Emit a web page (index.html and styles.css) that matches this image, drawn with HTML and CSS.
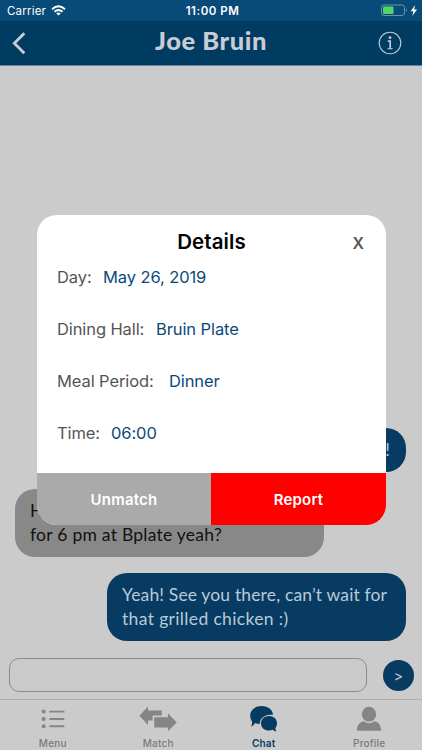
FILE: index.html
```html
<!DOCTYPE html>
<html lang="en">
<head>
    <meta charset="UTF-8">
    <meta name="viewport" content="width=device-width, initial-scale=1.0">
    <title>Joe Bruin</title>
    <link rel="stylesheet" href="styles.css">
</head>
<body>
    <div class="screen">
        <div class="status-bar">
            <div class="carrier">
                <span class="carrier-name">Carrier</span>
                <svg width="15" height="11" viewBox="0 0 15 11" fill="none" stroke="#fff" stroke-width="1.9">
                    <path d="M1 4.2Q7.5 -1.6 14 4.2"/>
                    <path d="M3.4 6.7Q7.5 3.1 11.6 6.7"/>
                    <path d="M7.5 10.6L5.3 8.4Q7.5 6.6 9.7 8.4Z" fill="#fff" stroke="none"/>
                </svg>
            </div>
            <div class="clock">11:00 PM</div>
            <div class="battery">
                <svg width="37" height="13" viewBox="0 0 37 13">
                    <rect x="0.5" y="1" width="23" height="10.5" rx="2.6" fill="none" stroke="#6f93ae"/>
                    <rect x="2" y="2.5" width="10.5" height="7.5" rx="1" fill="#4cd964"/>
                    <path d="M25 4.4Q26.6 6.2 25 8Z" fill="#8ba9be"/>
                    <path d="M34.2 1L29.6 7.2H32.4L31.2 11.9L36.1 5.6H33.1Z" fill="#fff"/>
                </svg>
            </div>
        </div>

        <div class="header">
            <svg class="back" width="14" height="23" viewBox="0 0 14 23" fill="none" stroke="#c9cdd3" stroke-width="2.8">
                <path d="M12.3 1.2L2.3 11.3L12.3 21.3"/>
            </svg>
            <h1>Joe Bruin</h1>
            <svg class="info" width="24" height="24" viewBox="0 0 24 24" fill="none" stroke="#c0cad4">
                <circle cx="12" cy="12" r="10.8" stroke-width="1.1"/>
                <circle cx="12" cy="6.7" r="1.4" fill="#c0cad4" stroke="none"/>
                <path d="M9.8 10.1H12.2V17.6" stroke-width="1.7"/>
                <path d="M9.6 17.7H14.6" stroke-width="1.1"/>
            </svg>
        </div>

        <div class="messages">
            <div class="bubble sent short">!</div>
            <div class="bubble received">H<br>for 6 pm at Bplate yeah?</div>
            <div class="bubble sent">Yeah! See you there, can’t wait for<br><span class="wide">that grilled chicken :)</span></div>
        </div>

        <div class="composer">
            <div class="message-input"></div>
            <div class="send">&gt;</div>
        </div>

        <div class="tabs">
            <div class="tab">
                <svg width="24" height="26" viewBox="0 0 24 26" fill="#858585">
                    <circle cx="2.6" cy="5.6" r="2"/>
                    <circle cx="2.6" cy="12.9" r="2"/>
                    <circle cx="2.6" cy="20.2" r="2"/>
                    <rect x="8.2" y="4.7" width="15.3" height="1.9" rx="0.9"/>
                    <rect x="8.2" y="12" width="15.3" height="1.9" rx="0.9"/>
                    <rect x="8.2" y="19.3" width="15.3" height="1.9" rx="0.9"/>
                </svg>
                <span>Menu</span>
            </div>
            <div class="tab">
                <svg width="38" height="26" viewBox="0 0 38 26" fill="#858585">
                    <path d="M0.4 9.8L9 0.5V4.5H22.8V9.6H13.6V14.6H9V19Z"/>
                    <path d="M15.2 11.2H28.9V7.3L37.8 16.5L28.9 25.2V21.4H15.2Z"/>
                </svg>
                <span>Match</span>
            </div>
            <div class="tab active">
                <svg width="28" height="26" viewBox="0 0 28 26" fill="#083b61">
                    <path d="M11.7 0C18 0 22.8 3.8 23 8.8C15.5 7.8 9.4 11.7 9.8 18C7.9 18 6.4 17.7 5 17.1C4.2 19 2.7 20.3 0.8 20.6C1.9 19.1 2.4 17.4 2 15.4C0.8 13.8 0.2 11.7 0.2 9.5C0.2 4.1 5.2 0 11.7 0Z"/>
                    <path d="M19 10.1C23.7 10.1 27 13.2 27 17.3C27 19.1 26.4 20.9 25.4 22.1C25.3 23.5 25.8 24.7 26.7 25.6C25.1 25.4 23.8 24.7 22.9 23.8C16.8 26 11 22.8 11 17.4C11 13.3 14.3 10.1 19 10.1Z"/>
                </svg>
                <span>Chat</span>
            </div>
            <div class="tab">
                <svg width="26" height="26" viewBox="0 0 26 26" fill="#858585">
                    <ellipse cx="13" cy="8.2" rx="7.2" ry="7.4"/>
                    <path d="M0.8 24.8C0.9 19.3 3.4 16.1 7.7 15.2Q13 19.1 18.3 15.2C22.6 16.1 25.1 19.3 25.2 24.8Z"/>
                </svg>
                <span>Profile</span>
            </div>
        </div>

        <!-- Match details popup -->
        <div class="modal">
            <div class="modal-body">
                <div class="modal-title">
                    <h2>Details</h2>
                    <span class="close">X</span>
                </div>
                <div class="row"><span class="label day">Day:</span><span class="value">May 26, 2019</span></div>
                <div class="row"><span class="label hall">Dining Hall:</span><span class="value">Bruin Plate</span></div>
                <div class="row"><span class="label meal">Meal Period:</span><span class="value">Dinner</span></div>
                <div class="row"><span class="label time">Time:</span><span class="value">06:00</span></div>
            </div>
            <div class="modal-buttons">
                <div class="unmatch">Unmatch</div>
                <div class="report">Report</div>
            </div>
        </div>
    </div>
</body>
</html>
```
FILE: styles.css
```css
* {
    box-sizing: border-box;
}

body {
    margin: 0;
    background-color: #cbcbcb;
    font-family: Inter, "Liberation Sans", sans-serif;
}

.screen {
    position: relative;
    display: flex;
    flex-direction: column;
    width: 422px;
    height: 750px;
    overflow: hidden;
    white-space: nowrap;
}

svg {
    display: block;
    flex: none;
}

/* Status bar */
.status-bar {
    display: grid;
    grid-template-columns: 1fr auto 1fr;
    align-items: center;
    height: 21px;
    padding: 0 4px 0 7px;
    background-color: #084a78;
    color: #fff;
    font-size: 11.5px;
}

.carrier {
    display: flex;
    align-items: center;
    gap: 5px;
}

.carrier-name {
    letter-spacing: 0.2px;
}

.clock {
    font-weight: 600;
    letter-spacing: 0.5px;
}

.battery {
    justify-self: end;
}

/* Header */
.header {
    display: grid;
    grid-template-columns: 60px 1fr 60px;
    align-items: center;
    height: 45px;
    background-color: #003b61;
    border-bottom: 1px solid #64829a;
}

.back {
    margin-left: 12px;
}

.header h1 {
    margin: 0;
    padding-bottom: 6px;
    color: #c9cdd3;
    font-family: Lato, sans-serif;
    font-size: 25.5px;
    font-weight: 900;
    line-height: 30px;
    letter-spacing: 0.55px;
    text-align: center;
}

.info {
    margin-left: 16px;
}

/* Conversation */
.messages {
    display: flex;
    flex: 1;
    flex-direction: column;
    justify-content: flex-end;
    gap: 16.5px;
    padding: 0 16px 17px 15px;
}

.bubble {
    padding: 10px 15px;
    border-radius: 20px;
    font-family: Lato, sans-serif;
    font-size: 17.5px;
    line-height: 24px;
    letter-spacing: 0.15px;
}

.sent {
    align-self: flex-end;
    width: 299px;
    background-color: #083b61;
    color: #b9cad8;
}

.sent .wide {
    letter-spacing: 0.35px;
}

.sent.short {
    width: 120px;
    padding-right: 16px;
    text-align: right;
}

.received {
    align-self: flex-start;
    width: 309px;
    background-color: #888;
    color: #111;
    letter-spacing: 0.25px;
}

.composer {
    display: flex;
    align-items: center;
    gap: 16px;
    height: 41px;
    padding: 0 8px 7px 9px;
}

.message-input {
    flex: 1;
    height: 34px;
    border: 1px solid #8c8c8c;
    border-radius: 10px;
}

.send {
    width: 31px;
    height: 31px;
    border-radius: 50%;
    background-color: #083b61;
    color: #c2cbd4;
    font-size: 14px;
    line-height: 32px;
    text-align: center;
}

/* Tab bar */
.tabs {
    display: grid;
    grid-template-columns: repeat(4, 1fr);
    height: 51px;
    padding-top: 6px;
    border-top: 1px solid #adadad;
}

.tab {
    display: flex;
    flex-direction: column;
    align-items: center;
    gap: 4px;
    color: #7a7a7a;
    font-size: 10px;
    font-weight: 500;
    line-height: 14px;
    letter-spacing: 0.2px;
}

.tab.active {
    color: #083b61;
    font-weight: 600;
}

/* Details popup */
.modal {
    position: absolute;
    top: 215px;
    left: 37px;
    width: 349px;
    height: 310px;
    border-radius: 20px;
    overflow: hidden;
    background-color: #fff;
}

.modal-body {
    height: 258px;
    padding: 12px 20px 0;
}

.modal-title {
    display: grid;
    grid-template-columns: 1fr auto 1fr;
    align-items: center;
    height: 28px;
}

.modal-title h2 {
    grid-column: 2;
    margin: 0;
    font-size: 20.5px;
    font-weight: 600;
    letter-spacing: 0.1px;
}

.close {
    justify-self: end;
    margin-right: 2px;
    padding-top: 4px;
    color: #555;
    font-size: 16px;
    font-weight: 600;
}

.row {
    display: flex;
    align-items: center;
    height: 44px;
    margin-bottom: 8px;
    font-size: 16.5px;
    letter-spacing: -0.1px;
}

.label {
    color: #555;
}

.value {
    color: #0b4a78;
}

.label.day {
    width: 46px;
}

.label.hall {
    width: 99px;
}

.label.meal {
    width: 112px;
}

.label.time {
    width: 54px;
}

.modal-buttons {
    display: flex;
    height: 52px;
    color: #fff;
    font-size: 15px;
    font-weight: 600;
    line-height: 53px;
    letter-spacing: 0.2px;
    text-align: center;
}

.unmatch {
    width: 174px;
    background-color: #aaa;
}

.report {
    flex: 1;
    background-color: #f00;
}
```
